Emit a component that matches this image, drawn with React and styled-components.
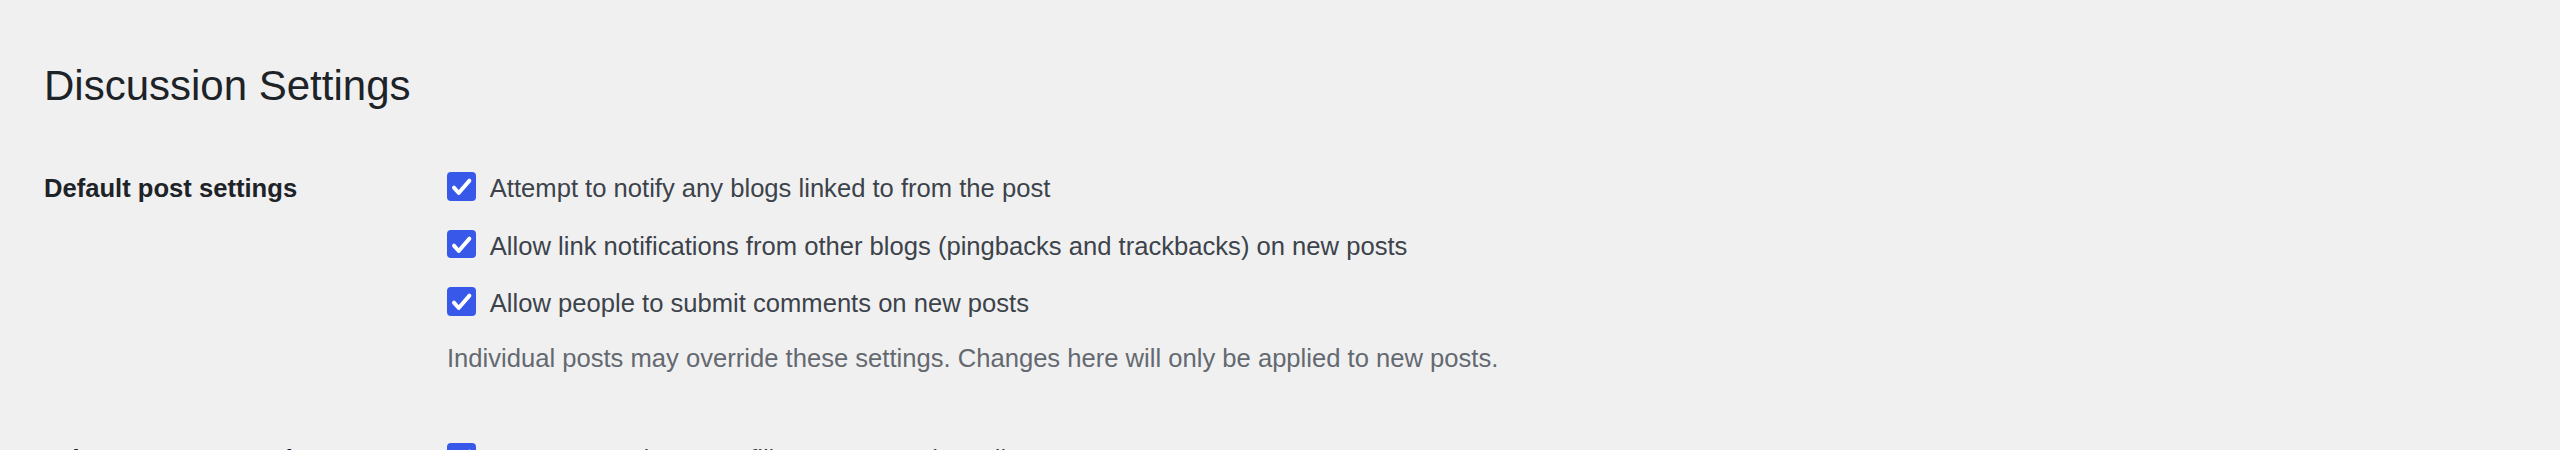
import styled, { createGlobalStyle } from "styled-components";

const GlobalStyle = createGlobalStyle`
    html, body {
        margin: 0;
        padding: 0;
        background: #f0f0f1;
    }
    body {
        font-family: "Liberation Sans", Arial, sans-serif;
        color: #3c434a;
    }
`;

const Wrap = styled.div`
    padding: 59px 44px 0 44px;
`;

const Title = styled.h1`
    margin: 0;
    font-size: 42px;
    font-weight: 400;
    line-height: 53.8px;
    color: #1d2327;
`;

const FormTable = styled.div`
    display: flex;
    flex-direction: column;
    gap: 70px;
    margin-top: 59.5px;
`;

const Row = styled.div`
    display: grid;
    grid-template-columns: 403px 1fr;
    align-items: start;
`;

const RowLabel = styled.div`
    font-size: 25.6px;
    font-weight: 700;
    line-height: 32.8px;
    color: #1d2327;
`;

const Options = styled.fieldset`
    margin: 0;
    padding: 0;
    border: 0;
    display: flex;
    flex-direction: column;
    gap: 26.5px;
`;

const Option = styled.label`
    display: flex;
    align-items: flex-start;
    gap: 14px;
    font-size: 25.6px;
    line-height: 28.8px;
    color: #3c434a;
    white-space: nowrap;
`;

const OptionText = styled.span`
    padding-top: 2px;
`;

const Box = styled.span`
    flex: none;
    width: 28.8px;
    height: 28.8px;
    border-radius: 4px;
    background: ${(props) => (props.checked ? "#3858e9" : "#fff")};
    border: ${(props) => (props.checked ? "none" : "1px solid #8c8f94")};
    box-sizing: border-box;
    display: flex;
    align-items: center;
    justify-content: center;

    svg {
        display: block;
    }
`;

const Description = styled.p`
    margin: 0;
    font-size: 25.6px;
    line-height: 28.8px;
    color: #646970;
    white-space: nowrap;
`;

const Checkbox = ({ checked, children }) => (
    <Option>
        <Box checked={checked}>
            {checked && (
                <svg width="29" height="29" viewBox="0 0 29 29">
                    <polyline
                        points="7,15.6 11.8,21 22.6,8.6"
                        fill="none"
                        stroke="#fff"
                        strokeWidth="3.9"
                        strokeLinecap="round"
                        strokeLinejoin="round"
                    />
                </svg>
            )}
        </Box>
        <OptionText>{children}</OptionText>
    </Option>
);

const settings = [
    {
        label: "Default post settings",
        options: [
            "Attempt to notify any blogs linked to from the post",
            "Allow link notifications from other blogs (pingbacks and trackbacks) on new posts",
            "Allow people to submit comments on new posts",
        ],
        note: "Individual posts may override these settings. Changes here will only be applied to new posts.",
    },
    {
        label: "Other comment settings",
        options: [
            "Comment author must fill out name and email",
            "Users must be registered and logged in to comment",
        ],
    },
];

export default function App() {
    return (
        <>
            <GlobalStyle />
            <Wrap>
                <Title>Discussion Settings</Title>
                <FormTable>
                    {settings.map((row) => (
                        <Row key={row.label}>
                            <RowLabel>{row.label}</RowLabel>
                            <Options>
                                {row.options.map((opt, i) => (
                                    <Checkbox key={opt} checked={i === 0 || row.options.length === 3}>
                                        {opt}
                                    </Checkbox>
                                ))}
                                {row.note && <Description>{row.note}</Description>}
                            </Options>
                        </Row>
                    ))}
                </FormTable>
            </Wrap>
        </>
    );
}
